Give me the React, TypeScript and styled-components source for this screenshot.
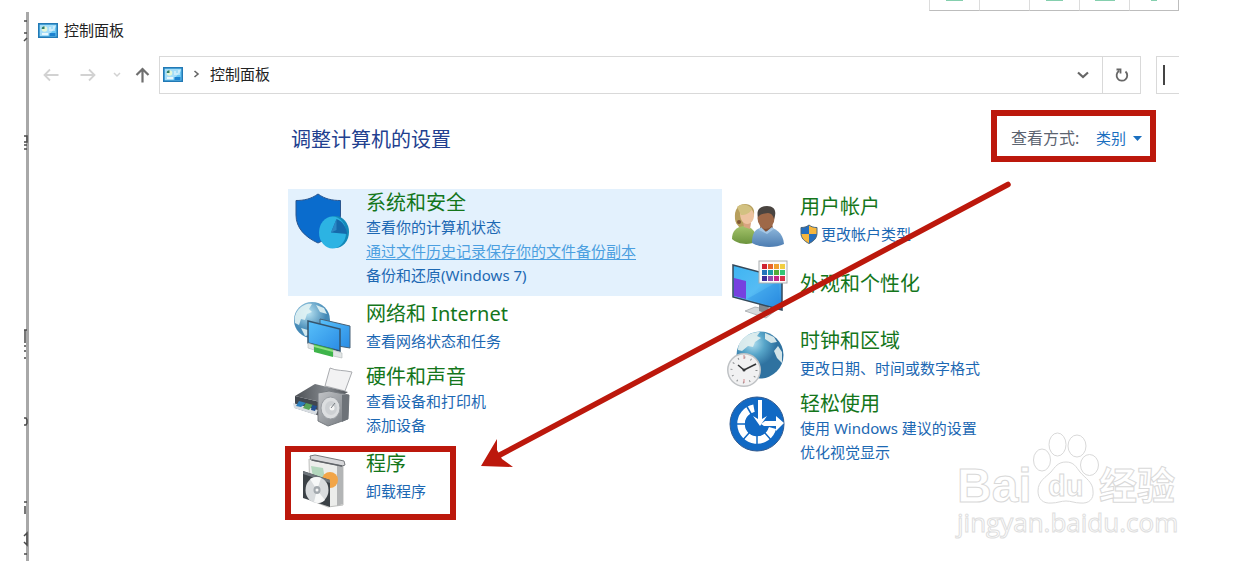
import React from "react";
import styled, { createGlobalStyle, css } from "styled-components";

const red = "#bc180c";
const line = "#d9d9d9";

const GlobalStyle = createGlobalStyle`
  *, *::before, *::after { box-sizing: border-box; }
  body {
    margin: 0;
    background: #fff;
    color: #222;
    font-family: "Noto Sans", "Noto Sans CJK SC", sans-serif;
    font-size: 15px;
    line-height: 24px;
  }
  h1, h2, ul, p { margin: 0; padding: 0; font-weight: 400; }
  ul { list-style: none; }
  button, select, input { font: inherit; color: inherit; border: 0; padding: 0; background: none; outline: none; }
  svg { display: block; flex: none; overflow: visible; }
`;

const Page = styled.div`
  position: relative;
  padding: 0 69px 5px 26px;
`;

const Strip = styled.div`
  display: flex;
  justify-content: flex-end;
  height: 12px;
  padding-bottom: 1px;
`;

const StripCell = styled.button`
  display: flex;
  justify-content: center;
  width: 50px;
  border-left: 1px solid #dcdcdc;
  border-bottom: 1px solid #bdbdbd;
  &:last-child { border-right: 1px solid #bdbdbd; }
`;

const StripMark = styled.span<{ $width: number }>`
  width: ${(p) => p.$width}px;
  height: 1px;
  background: #85cfae;
`;

const Window = styled.main`
  position: relative;
  min-height: 549px;
  border-left: 3px solid #a8a8a8;
`;

const EdgeMarks = styled.svg`
  position: absolute;
  left: -5px;
  top: 0;
`;

const TitleBar = styled.header`
  display: flex;
  align-items: center;
  gap: 6px;
  height: 36px;
  padding-left: 9px;
`;

const NavBar = styled.nav`
  display: flex;
  align-items: center;
  height: 54px;
  padding-left: 14px;
`;

const NavButton = styled.button<{ $gap: number }>`
  display: flex;
  margin-right: ${(p) => p.$gap}px;
`;

const Address = styled.div`
  display: flex;
  align-items: stretch;
  flex: 1;
  height: 38px;
  margin-right: 15px;
  border: 1px solid ${line};
`;

const Crumbs = styled.div`
  display: flex;
  align-items: center;
  flex: 1;
  gap: 11px;
  padding: 0 0 2px 3px;
`;

const AddressButton = styled.button<{ $divided?: boolean }>`
  display: flex;
  align-items: center;
  justify-content: center;
  width: 38px;
  ${(p) => p.$divided && css`border-left: 1px solid ${line};`}
`;

const Search = styled.label`
  display: flex;
  align-items: center;
  width: 23px;
  height: 38px;
  padding-left: 6px;
  border: 1px solid ${line};
  border-right: 0;
  input { width: 12px; }
`;

const Caret = styled.span`
  width: 2px;
  height: 20px;
  background: #444;
`;

const Content = styled.section`
  padding: 8px 23px 0 259px;
`;

const ContentHead = styled.div`
  display: flex;
  align-items: center;
  justify-content: space-between;
  height: 52px;
  padding-left: 3px;
`;

const PageTitle = styled.h1`
  padding-top: 8px;
  color: #22408f;
  font-size: 20px;
  line-height: 28px;
`;

const ViewBy = styled.div`
  display: flex;
  align-items: center;
  width: 165px;
  height: 52px;
  padding: 4px 0 0 14px;
  border: 6px solid ${red};
  label { width: 85px; font-size: 16px; color: #5c6470; }
  select { appearance: none; width: 30px; margin-right: 7px; color: #1a6fbf; }
`;

const Catalog = styled.div`
  position: relative;
  display: grid;
  grid-template-columns: 1fr 1fr;
  margin-top: 27px;
`;

const Column = styled.ul<{ $offset?: number }>`
  display: flex;
  flex-direction: column;
  gap: 4px;
  padding-top: ${(p) => p.$offset ?? 0}px;
`;

type Kind = "list" | "single" | "title";

const bottomPadding: Record<Kind, number> = { list: 9, single: 6, title: 15 };

const Item = styled.li<{ $kind: Kind; $active?: boolean }>`
  position: relative;
  display: flex;
  gap: 15px;
  padding: 2px 0 ${(p) => bottomPadding[p.$kind]}px 3px;
  ${(p) => p.$active && css`background: #e3f1fd;`}
`;

const ItemText = styled.div<{ $kind: Kind }>`
  display: flex;
  flex-direction: column;
  align-items: flex-start;
  row-gap: ${(p) => (p.$kind === "single" ? 3 : 0)}px;
  padding-top: ${(p) => (p.$kind === "title" ? 14 : 0)}px;
`;

const ItemTitle = styled.h2`
  font-size: 20px;
  line-height: 24px;
  white-space: nowrap;
  a { color: #14761b; text-decoration: none; }
`;

const TaskLink = styled.a<{ $hovered?: boolean }>`
  display: flex;
  align-items: center;
  gap: 3px;
  white-space: nowrap;
  color: ${(p) => (p.$hovered ? "#4b9fe0" : "#1c68b3")};
  text-decoration: ${(p) => (p.$hovered ? "underline" : "none")};
  text-underline-offset: 2px;
`;

const Frame = styled.div`
  position: absolute;
  left: -3px;
  top: -4px;
  width: 171px;
  height: 74px;
  border: 6px solid ${red};
`;

const Arrow = styled.svg`
  position: absolute;
  left: 192px;
  top: -8px;
  pointer-events: none;
`;

const Watermark = styled.svg`
  position: absolute;
  right: 64px;
  bottom: 24px;
`;

const PanelIcon = () => (
  <svg width="20" height="15" viewBox="0 0 20 15" aria-hidden="true">
    <rect x="0.75" y="0.75" width="18.5" height="13.5" fill="#69c6f3" stroke="#2279b5" strokeWidth="1.5" />
    <path d="M2 2h16v2L10 13H2z" fill="#a4ddf8" />
    <circle cx="6.5" cy="6" r="2.8" fill="#e6f6d6" />
    <path d="M6.5 6V3.2A2.8 2.8 0 0 0 3.7 6z" fill="#2f7d68" />
    <path d="M12 4v4M14 6v2M16 3v5" stroke="#f2fbff" strokeWidth="1" />
    <path d="M11.500 10h6v3h-6z" fill="#1c82d0" />
    <path d="M4 11h6" stroke="#fff" strokeWidth="1.500" />
  </svg>
);

const Icon = ({ children }: { children: React.ReactNode }) => (
  <svg width="60" height="50" viewBox="0 0 60 50" aria-hidden="true">{children}</svg>
);

const SecurityIcon = () => (
  <Icon>
    <path d="M27 3C20 8 13 9.500 5 9.500V24c0 13 9 22 22 28 14-6 22.500-15 22.500-28V9.500C41 9.500 34 8 27 3z" fill="#0a6ccd" stroke="#2b568f" />
    <ellipse cx="44.500" cy="41" rx="13.500" ry="16" fill="#1489b8" />
    <ellipse cx="41.500" cy="41.500" rx="13.500" ry="16" fill="#2cb3e3" />
    <path d="M40 41.500L45.500 28c6 2 10 8 10.500 15z" fill="#1569ab" />
    <path d="M40 41.500L45.500 28v11z" fill="#2c87c4" />
  </Icon>
);

const NetworkIcon = () => (
  <Icon>
    <defs>
      <radialGradient id="net-globe" cx="40%" cy="30%"><stop offset="0" stopColor="#b9e3f2" /><stop offset="1" stopColor="#4489b6" /></radialGradient>
      <linearGradient id="net-screen" x1="0" y1="0" x2="1" y2="1"><stop offset="0" stopColor="#58c0fa" /><stop offset="1" stopColor="#2a8ce4" /></linearGradient>
    </defs>
    <circle cx="21" cy="18" r="18" fill="url(#net-globe)" />
    <path d="M7 8c5-6 11-7 14-6l-3 5 3 3-5 2-2 6-4-1-2 6-4-2c-1-5 0-9 3-13zM25 3l8 3 3 6-7-2zM10 26l7 2 2 5-5 1z" fill="#e2f3f4" opacity=".9" />
    <path d="M29 17l30 7v22l-30-5z" fill="url(#net-screen)" stroke="#486176" />
    <path d="M17 19l32 8v22l-32-8z" fill="url(#net-screen)" stroke="#35546d" strokeWidth="1.500" />
    <path d="M17 41l6 2v5l-6-2zM42 48l9 3v5l-9-2z" fill="#e2e5e5" stroke="#b3b9b9" strokeWidth=".6" />
    <path d="M23 42l19 5v8l-19-5z" fill="#3eb44a" />
    <path d="M23 43l19 5v2l-19-5z" fill="#8fe07f" />
  </Icon>
);

const HardwareIcon = () => (
  <Icon>
    <defs>
      <linearGradient id="hw-box" x1="0" y1="0" x2="1" y2="1"><stop offset="0" stopColor="#c2c4c7" /><stop offset="1" stopColor="#73787e" /></linearGradient>
      <linearGradient id="hw-lid" x1="0" y1="0" x2="1" y2="0"><stop offset="0" stopColor="#4d5156" /><stop offset=".6" stopColor="#85898e" /><stop offset="1" stopColor="#53575c" /></linearGradient>
    </defs>
    <path d="M39 3c6 3 14 2 22 4l-7 19-20-5z" fill="#f2f2f3" stroke="#aaacb0" />
    <path d="M4 31l20-12 33 8-19 12z" fill="url(#hw-lid)" />
    <path d="M4 31l25 6v14L4 43z" fill="#42474e" />
    <path d="M2 38l25 7-2 5L3 43z" fill="#d8dde2" />
    <path d="M8 36l7 2-5 4-5-1z" fill="#2c7ebc" />
    <path d="M15 38l7 2-4 5-6-2z" fill="#58a45a" />
    <path d="M21 40l5 1-2 5-4-1z" fill="#234f90" />
    <path d="M27 28l11-2 20 4-1 24-20 7-10-5z" fill="url(#hw-box)" stroke="#767b80" />
    <path d="M51 30l7 0-1 24-6 3z" fill="#6d7278" />
    <ellipse cx="39.500" cy="43" rx="9.500" ry="11" fill="#dcdee0" stroke="#9a9ea3" />
    <ellipse cx="40" cy="43" rx="6" ry="7" fill="#cdd0d3" />
    <circle cx="41" cy="43" r="2.500" fill="#f4f4f4" />
    <path d="M40 43l4-5" stroke="#787d82" />
  </Icon>
);

const ProgramsIcon = () => (
  <Icon>
    <path d="M18 7l34 5v41l-15 2-18-7z" fill="#ecedeb" stroke="#bfc0be" />
    <path d="M46 12l6-2v42l-6 2z" fill="#b3b5b6" />
    <path d="M19 4l5-1 29 6 1 4-3 1-31-6z" fill="#d7d8da" stroke="#777a7d" />
    <path d="M21 8l30 6" stroke="#606468" strokeWidth="1.500" />
    <path d="M20 14l12 2 2 11-12-2z" fill="#b3d7bd" />
    <circle cx="39" cy="28" r="8" fill="#f2a548" />
    <path d="M12 19l27 9v27l-27-9z" fill="#3b4146" />
    <path d="M12 19l27 9v3L12 22z" fill="#6e757b" />
    <ellipse cx="26" cy="38" rx="11.500" ry="13" fill="#d9dcde" />
    <path d="M26 38L19 27c3-2 7-3 11-1zM26 38l8 10c-3 3-7 4-11 2z" fill="#f7f8f8" />
    <ellipse cx="26" cy="38" rx="3.500" ry="4" fill="#a3a9ae" />
    <circle cx="26" cy="38" r="1.500" fill="#f6f6f6" />
  </Icon>
);

const UsersIcon = () => (
  <Icon>
    <defs>
      <linearGradient id="user-green" x1="0" y1="0" x2="0" y2="1"><stop offset="0" stopColor="#a5c46c" /><stop offset="1" stopColor="#6c943d" /></linearGradient>
      <linearGradient id="user-blue" x1="0" y1="0" x2="0" y2="1"><stop offset="0" stopColor="#8fb8dc" /><stop offset="1" stopColor="#4d7db2" /></linearGradient>
    </defs>
    <path d="M10 24c-1-9 3-15 10-15 6 0 10 4 9 11l-6 13c-5 2-12-1-13-9z" fill="#b79f5d" />
    <path d="M7 44c0-8 4-12 12-13 8 1 12 5 13 15-8 5-20 3-25-2z" fill="url(#user-green)" />
    <path d="M18 27l8 1-1 6-6-2z" fill="#d8a480" />
    <path d="M15 18c5 0 8-2 10-5 4 3 5 7 3 12-2 4-6 5-9 3-3-2-4-6-4-10z" fill="#edc3a0" />
    <path d="M12 12c4-4 12-3 15 2-2 4-6 6-11 6z" fill="#d2c181" />
    <circle cx="14" cy="27" r="2" fill="#7f5636" />
    <path d="M27 48c0-10 3-15 13-16 11 0 18 6 19 17-8 4-24 4-32-1z" fill="url(#user-blue)" />
    <path d="M36 29l11-1 1 6-8 3-5-4z" fill="#815036" />
    <ellipse cx="41" cy="23" rx="8.500" ry="11" fill="#9e6848" />
    <path d="M33 22c-2-7 2-11 9-11 8 0 10 6 7 13-1-4-3-6-6-6-4 1-7 0-10 4z" fill="#4a4440" />
    <path d="M36 32l5 5 6-5 2 2-7 5-8-4z" fill="#a4c6e5" />
  </Icon>
);

const AppearanceIcon = () => {
  const dots = ["#cf2331", "#e6672b", "#f0a12e", "#f1ce41", "#2474bb", "#1d9aa7", "#54ac37", "#33c575", "#3c2f99", "#914eaa", "#c52788", "#d83148"];
  return (
    <Icon>
      <defs>
        <linearGradient id="desk" x1="0" y1="0" x2="1" y2="1"><stop offset="0" stopColor="#3db4f2" /><stop offset=".5" stopColor="#56bcf4" /><stop offset="1" stopColor="#207fda" /></linearGradient>
      </defs>
      <path d="M20 53l10-4 20 4-9 7z" fill="#d6d9db" stroke="#9ba0a4" strokeWidth=".7" />
      <path d="M34 45l10 3-1 8-9-3z" fill="#84898e" />
      <path d="M8 7l49 13v32L8 39z" fill="url(#desk)" stroke="#34495b" strokeWidth="1.500" />
      <path d="M9 20l12 3v18L9 38z" fill="#7641df" />
      <path d="M22 41L54 23v27z" fill="#2e91e4" opacity=".4" />
      <rect x="34" y="3" width="28" height="22" fill="#fbfbfb" stroke="#aaadb0" />
      {dots.map((c, i) => <rect key={c} x={37 + (i % 4) * 6} y={6 + Math.floor(i / 4) * 6} width="5" height="5" fill={c} />)}
    </Icon>
  );
};

const ClockIcon = () => (
  <Icon>
    <defs>
      <radialGradient id="world" cx="35%" cy="25%"><stop offset="0" stopColor="#b0deef" /><stop offset=".5" stopColor="#57a5c9" /><stop offset="1" stopColor="#2f72a0" /></radialGradient>
    </defs>
    <circle cx="35" cy="26" r="23.500" fill="url(#world)" />
    <path d="M16 12c6-7 12-9 19-9l-3 4 4 2-6 4-2 5-5-1-6 5-4-1c0-4 1-6 3-9zM40 4l9 4 3 5-6 1-6-4zM53 17l4 6v11l-5-5-3-7z" fill="#e5f1ef" opacity=".9" />
    <circle cx="19" cy="41" r="17" fill="#bfc2c5" />
    <circle cx="19" cy="41" r="15.500" fill="#f1f1f2" />
    <circle cx="19" cy="41" r="12.500" fill="none" stroke="#8c8f91" strokeWidth="2" strokeDasharray="1 5.540" />
    <path d="M13 36l6 5 12-6" fill="none" stroke="#343638" strokeWidth="1.500" />
    <path d="M19 26v4M19 50v4" stroke="#d4868a" />
    <circle cx="19" cy="41" r="1.500" fill="#343638" />
  </Icon>
);

const EaseIcon = () => (
  <Icon>
    <circle cx="32" cy="32" r="27" fill="#1169c4" stroke="#315a8f" />
    <path d="M29 16.300A16 16 0 1 0 47.500 36" fill="none" stroke="#fff" strokeWidth="7.500" />
    <path d="M32 32L21 13M32 32H10M32 32L16 50M32 32v22M32 32l15 17" stroke="#1169c4" strokeWidth="1.500" />
    <circle cx="32" cy="32" r="12" fill="#1169c4" />
    <path d="M33 8h4v19l5-3-7 10-7-10 5 3z" fill="#fff" />
    <path d="M36 32l4-3h11v-5l8 7-8 8v-5H39z" fill="#fff" />
  </Icon>
);

const UacShield = () => (
  <svg width="18" height="20" viewBox="0 0 18 20" aria-hidden="true">
    <path d="M9 1C6.500 3 4 3.500 1 3.500V9c0 5 3 8 8 10.500C14 17 17 14 17 9V3.500C14 3.500 11.500 3 9 1z" fill="#f6b63c" />
    <path d="M9 1C6.500 3 4 3.500 1 3.500V10h8zM9 10h8c-.5 4.500-3.500 7.500-8 9.500z" fill="#256ebd" />
    <path d="M9 1C6.500 3 4 3.500 1 3.500V9c0 5 3 8 8 10.500C14 17 17 14 17 9V3.500C14 3.500 11.500 3 9 1z" fill="none" stroke="#49667e" />
  </svg>
);

interface Task { text: string; hovered?: boolean; shield?: boolean }
interface Category { title: string; icon: React.ReactNode; tasks: Task[]; active?: boolean; framed?: boolean }

const left: Category[] = [
  { title: "系统和安全", icon: <SecurityIcon />, active: true, tasks: [{ text: "查看你的计算机状态" }, { text: "通过文件历史记录保存你的文件备份副本", hovered: true }, { text: "备份和还原(Windows 7)" }] },
  { title: "网络和 Internet", icon: <NetworkIcon />, tasks: [{ text: "查看网络状态和任务" }] },
  { title: "硬件和声音", icon: <HardwareIcon />, tasks: [{ text: "查看设备和打印机" }, { text: "添加设备" }] },
  { title: "程序", icon: <ProgramsIcon />, framed: true, tasks: [{ text: "卸载程序" }] },
];

const right: Category[] = [
  { title: "用户帐户", icon: <UsersIcon />, tasks: [{ text: "更改帐户类型", shield: true }] },
  { title: "外观和个性化", icon: <AppearanceIcon />, tasks: [] },
  { title: "时钟和区域", icon: <ClockIcon />, tasks: [{ text: "更改日期、时间或数字格式" }] },
  { title: "轻松使用", icon: <EaseIcon />, tasks: [{ text: "使用 Windows 建议的设置" }, { text: "优化视觉显示" }] },
];

const CategoryItem = ({ title, icon, tasks, active, framed }: Category) => {
  const kind: Kind = tasks.length > 1 ? "list" : tasks.length ? "single" : "title";
  return (
    <Item $kind={kind} $active={active}>
      {icon}
      <ItemText $kind={kind}>
        <ItemTitle><a href="#">{title}</a></ItemTitle>
        {tasks.map((t) => (
          <TaskLink key={t.text} href="#" $hovered={t.hovered}>{t.shield && <UacShield />}{t.text}</TaskLink>
        ))}
      </ItemText>
      {framed && <Frame />}
    </Item>
  );
};

export default function App() {
  return (
    <Page>
      <GlobalStyle />
      <Strip>
        {[17, 0, 17, 20, 6].map((w, i) => (
          <StripCell key={i} aria-label={`工具 ${i + 1}`}><StripMark $width={w} /></StripCell>
        ))}
      </Strip>
      <Window>
        <EdgeMarks width="4" height="549" viewBox="0 0 4 549" aria-hidden="true">
          <path d="M0 9h3M0 21h3M0 29l3-3M0 124h3v6H0M0 133h3M0 137h3M0 318h3M1 318v13M0 334h2M0 339h2M0 346h2M0 406h2l1 2v3l-1 2H0M0 490h3M1 494v8M0 524l3-3v12l-3-3M0 542h3" fill="none" stroke="#4b4b4b" strokeWidth="1.500" />
        </EdgeMarks>
        <TitleBar><PanelIcon />控制面板</TitleBar>
        <NavBar>
          <NavButton $gap={21} aria-label="后退">
            <svg width="16" height="14" viewBox="0 0 16 14"><path d="M15.500 7H2M7 1.500L1.500 7 7 12.500" fill="none" stroke="#d2d2d2" strokeWidth="1.800" /></svg>
          </NavButton>
          <NavButton $gap={17} aria-label="前进">
            <svg width="16" height="14" viewBox="0 0 16 14"><path d="M.5 7H14M9 1.500L14.500 7 9 12.500" fill="none" stroke="#d2d2d2" strokeWidth="1.800" /></svg>
          </NavButton>
          <NavButton $gap={14} aria-label="最近浏览的位置">
            <svg width="8" height="6" viewBox="0 0 8 6"><path d="M1 1l3 3 3-3" fill="none" stroke="#d2d2d2" strokeWidth="1.500" /></svg>
          </NavButton>
          <NavButton $gap={9} aria-label="上移">
            <svg width="15" height="16" viewBox="0 0 15 16"><path d="M7.500 15.500V2M1.500 8l6-6 6 6" fill="none" stroke="#6f6f6f" strokeWidth="2.200" /></svg>
          </NavButton>
          <Address>
            <Crumbs>
              <PanelIcon />
              <svg width="5" height="8" viewBox="0 0 5 8"><path d="M.5 1L4 4 .5 7" fill="none" stroke="#666" strokeWidth="1.600" /></svg>
              <span>控制面板</span>
            </Crumbs>
            <AddressButton aria-label="展开">
              <svg width="12" height="8" viewBox="0 0 12 8"><path d="M1 1.500l5 4.500 5-4.500" fill="none" stroke="#666" strokeWidth="2.200" /></svg>
            </AddressButton>
            <AddressButton $divided aria-label="刷新">
              <svg width="14" height="14" viewBox="0 0 14 14"><path d="M10.500 3.500A5.300 5.300 0 1 1 4 3M1.500 1.500h4v4" fill="none" stroke="#666" strokeWidth="1.800" /></svg>
            </AddressButton>
          </Address>
          <Search><Caret /><input type="text" aria-label="搜索控制面板" /></Search>
        </NavBar>
        <Content>
          <ContentHead>
            <PageTitle>调整计算机的设置</PageTitle>
            <ViewBy>
              <label htmlFor="view-by">查看方式:</label>
              <select id="view-by"><option>类别</option></select>
              <svg width="9" height="5" viewBox="0 0 9 5"><path d="M0 0h9L4.500 5z" fill="#1a6fbf" /></svg>
            </ViewBy>
          </ContentHead>
          <Catalog>
            <Column>{left.map((c) => <CategoryItem key={c.title} {...c} />)}</Column>
            <Column $offset={4}>{right.map((c) => <CategoryItem key={c.title} {...c} />)}</Column>
            <Arrow width="531" height="290" viewBox="0 0 531 290" aria-hidden="true">
              <path d="M528 3.500L16 276" stroke={red} strokeWidth="5.500" strokeLinecap="round" />
              <path d="M1 285l16-27v11l5 9 11 8z" fill={red} />
            </Arrow>
          </Catalog>
        </Content>
      </Window>
      <Watermark width="230" height="112" viewBox="954 430 230 112" fill="#fff" stroke="#d9d9d9" aria-label="Baidu 经验">
        <text x="957" y="502" fontFamily="Liberation Sans, sans-serif" fontWeight="700" fontSize="48">Bai</text>
        <ellipse cx="1042" cy="460" rx="8.500" ry="11" />
        <ellipse cx="1057.500" cy="444.500" rx="8.500" ry="11.500" />
        <ellipse cx="1077" cy="446" rx="9" ry="11" />
        <ellipse cx="1089.500" cy="465" rx="9" ry="10.500" />
        <path d="M1066 462c-8 0-11 5-15 10-5 5-13 9-13 19 0 8 5 13 14 12 5 0 9-2 14-2s9 2 14 2c9 1 14-4 13-12 0-9-8-13-13-19-4-5-6-10-14-10z" />
        <text x="1048" y="496" fontFamily="Liberation Sans, sans-serif" fontWeight="700" fontSize="29">du</text>
        <text x="1099" y="499" fontFamily="Noto Sans CJK SC, sans-serif" fontWeight="700" fontSize="38">经验</text>
        <text x="957" y="532" fontFamily="Open Sans, sans-serif" fontSize="26" stroke="#dedede">jingyan.baidu.com</text>
      </Watermark>
    </Page>
  );
}
